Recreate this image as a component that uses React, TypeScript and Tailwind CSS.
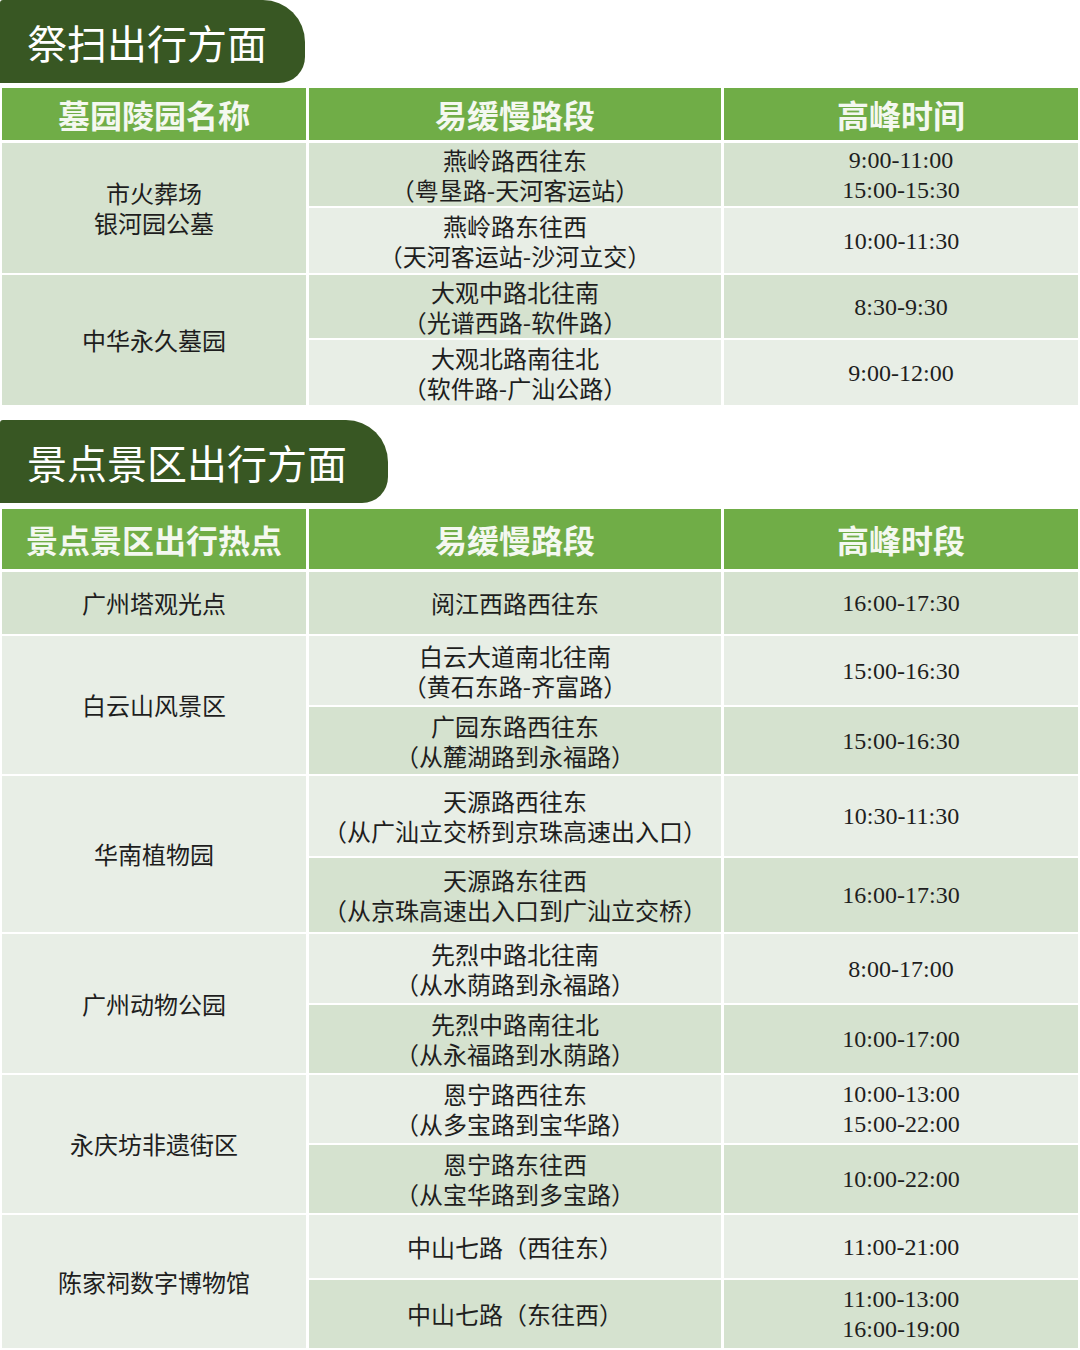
import React from 'react';

type SubRow = { road: string[]; time: string[]; h: string; bg: string };
type Group = { name: string[]; bg: string; span: string; rows: SubRow[] };

const DARK = 'bg-[#d5e2cf]';
const LIGHT = 'bg-[#e8eee6]';

const tombGroups: Group[] = [
  {
    name: ['市火葬场', '银河园公墓'],
    bg: DARK,
    span: 'row-span-2',
    rows: [
      { road: ['燕岭路西往东', '（粤垦路-天河客运站）'], time: ['9:00-11:00', '15:00-15:30'], h: 'h-[63px]', bg: DARK },
      { road: ['燕岭路东往西', '（天河客运站-沙河立交）'], time: ['10:00-11:30'], h: 'h-[65px]', bg: LIGHT },
    ],
  },
  {
    name: ['中华永久墓园'],
    bg: DARK,
    span: 'row-span-2',
    rows: [
      { road: ['大观中路北往南', '（光谱西路-软件路）'], time: ['8:30-9:30'], h: 'h-[63px]', bg: DARK },
      { road: ['大观北路南往北', '（软件路-广汕公路）'], time: ['9:00-12:00'], h: 'h-[65px]', bg: LIGHT },
    ],
  },
];

const sceneGroups: Group[] = [
  {
    name: ['广州塔观光点'],
    bg: DARK,
    span: 'row-span-1',
    rows: [{ road: ['阅江西路西往东'], time: ['16:00-17:30'], h: 'h-[62px]', bg: DARK }],
  },
  {
    name: ['白云山风景区'],
    bg: LIGHT,
    span: 'row-span-2',
    rows: [
      { road: ['白云大道南北往南', '（黄石东路-齐富路）'], time: ['15:00-16:30'], h: 'h-[69px]', bg: LIGHT },
      { road: ['广园东路西往东', '（从麓湖路到永福路）'], time: ['15:00-16:30'], h: 'h-[67px]', bg: DARK },
    ],
  },
  {
    name: ['华南植物园'],
    bg: LIGHT,
    span: 'row-span-2',
    rows: [
      { road: ['天源路西往东', '（从广汕立交桥到京珠高速出入口）'], time: ['10:30-11:30'], h: 'h-[80px]', bg: LIGHT },
      { road: ['天源路东往西', '（从京珠高速出入口到广汕立交桥）'], time: ['16:00-17:30'], h: 'h-[74px]', bg: DARK },
    ],
  },
  {
    name: ['广州动物公园'],
    bg: LIGHT,
    span: 'row-span-2',
    rows: [
      { road: ['先烈中路北往南', '（从水荫路到永福路）'], time: ['8:00-17:00'], h: 'h-[69px]', bg: LIGHT },
      { road: ['先烈中路南往北', '（从永福路到水荫路）'], time: ['10:00-17:00'], h: 'h-[68px]', bg: DARK },
    ],
  },
  {
    name: ['永庆坊非遗街区'],
    bg: LIGHT,
    span: 'row-span-2',
    rows: [
      { road: ['恩宁路西往东', '（从多宝路到宝华路）'], time: ['10:00-13:00', '15:00-22:00'], h: 'h-[68px]', bg: LIGHT },
      { road: ['恩宁路东往西', '（从宝华路到多宝路）'], time: ['10:00-22:00'], h: 'h-[68px]', bg: DARK },
    ],
  },
  {
    name: ['陈家祠数字博物馆'],
    bg: LIGHT,
    span: 'row-span-2',
    rows: [
      { road: ['中山七路（西往东）'], time: ['11:00-21:00'], h: 'h-[63px]', bg: LIGHT },
      { road: ['中山七路（东往西）'], time: ['11:00-13:00', '16:00-19:00'], h: 'h-[68px]', bg: DARK },
    ],
  },
];

const cjk = "font-['Noto_Sans_CJK_SC',sans-serif]";
const serif = "font-['Liberation_Serif','Times_New_Roman',serif]";

const Tab: React.FC<{ title: string; width: string }> = ({ title, width }) => (
  <div className={`h-[83px] ${width} rounded-tr-[42px] rounded-br-[26px] rounded-tl-[3px] bg-[#385723] flex items-center pl-[27px]`}>
    <span className={`${cjk} text-[40px] leading-none text-white font-normal`}>{title}</span>
  </div>
);

const Table: React.FC<{ headers: string[]; headerH: string; groups: Group[] }> = ({ headers, headerH, groups }) => (
  <div className="px-[2px]">
    <div className={`grid grid-cols-[304px_412px_354px] gap-x-[3px] ${headerH}`}>
      {headers.map((h) => (
        <div key={h} className="bg-[#70ad47] flex items-center justify-center">
          <span className={`${cjk} text-[32px] font-bold leading-none text-[#f4f8f0]`}>{h}</span>
        </div>
      ))}
    </div>
    <div className={`mt-[3px] grid grid-cols-[304px_412px_354px] gap-x-[3px] gap-y-[2px] ${cjk} text-[24px] leading-[30px] text-[#1e1e1e]`}>
      {groups.map((g) => (
        <React.Fragment key={g.name.join('')}>
          <div className={`${g.span} col-start-1 ${g.bg} flex flex-col items-center justify-center text-center`}>
            {g.name.map((n) => (
              <div key={n}>{n}</div>
            ))}
          </div>
          {g.rows.map((r) => (
            <React.Fragment key={r.road.join('')}>
              <div className={`col-start-2 ${r.h} ${r.bg} flex flex-col items-center justify-center text-center`}>
                {r.road.map((t) => (
                  <div key={t} className="whitespace-nowrap">{t}</div>
                ))}
              </div>
              <div className={`col-start-3 ${r.h} ${r.bg} flex flex-col items-center justify-center text-center ${serif} text-[24px] leading-[30px]`}>
                {r.time.map((t) => (
                  <div key={t}>{t}</div>
                ))}
              </div>
            </React.Fragment>
          ))}
        </React.Fragment>
      ))}
    </div>
  </div>
);

export default function App() {
  return (
    <div className="w-[1080px] h-[1350px] bg-white overflow-hidden">
      <Tab title="祭扫出行方面" width="w-[305px]" />
      <div className="mt-[5px]">
        <Table headers={['墓园陵园名称', '易缓慢路段', '高峰时间']} headerH="h-[52px]" groups={tombGroups} />
      </div>
      <div className="mt-[15px]">
        <Tab title="景点景区出行方面" width="w-[388px]" />
      </div>
      <div className="mt-[6px]">
        <Table headers={['景点景区出行热点', '易缓慢路段', '高峰时段']} headerH="h-[60px]" groups={sceneGroups} />
      </div>
    </div>
  );
}
